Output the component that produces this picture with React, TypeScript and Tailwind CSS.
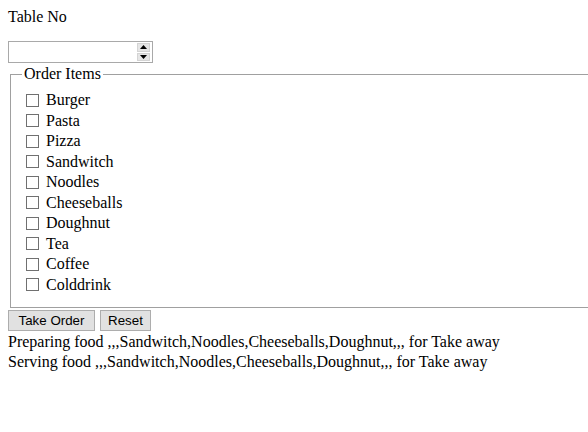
import React from "react";

const items = [
  "Burger",
  "Pasta",
  "Pizza",
  "Sandwitch",
  "Noodles",
  "Cheeseballs",
  "Doughnut",
  "Tea",
  "Coffee",
  "Colddrink",
];

const summary = ",,,Sandwitch,Noodles,Cheeseballs,Doughnut,,, for Take away";

function SpinBox() {
  return (
    <div className="mt-[15px] flex h-[22px] w-[145px] items-center justify-end border border-[#a9a9a9] bg-white pr-[2px]">
      {/* up / down arrows */}
      <div className="flex h-[18px] w-[13px] flex-col gap-px">
        <div className="flex flex-1 items-center justify-center border border-[#d4d4d4] bg-[#e6e6e6]">
          <svg width="7" height="4" viewBox="0 0 7 4">
            <path d="M3.5 0 L7 4 L0 4 Z" fill="#000" />
          </svg>
        </div>
        <div className="flex flex-1 items-center justify-center border border-[#d4d4d4] bg-[#e6e6e6]">
          <svg width="7" height="4" viewBox="0 0 7 4">
            <path d="M0 0 L7 0 L3.5 4 Z" fill="#000" />
          </svg>
        </div>
      </div>
    </div>
  );
}

function CheckRow({ label }: { label: string }) {
  return (
    <div className="flex h-[20.5px] items-center">
      <span className="h-[13px] w-[13px] shrink-0 border border-[#707070] bg-white" />
      <span className="ml-[7px] leading-[18px]">{label}</span>
    </div>
  );
}

export default function App() {
  return (
    <div className="min-h-screen w-full overflow-hidden bg-white px-2 pt-2 font-['Liberation_Serif',serif] text-[16px] text-black">
      <div className="leading-[18px]">Table No</div>

      <SpinBox />

      {/* ORDER ITEMS */}
      <fieldset className="mx-[2px] mt-[2px] w-[620px] border border-[#a0a0a0] pb-[12px] pl-[15px] pt-[7px]">
        <legend className="-ml-[4px] px-[2px] leading-[18px]">Order Items</legend>
        {items.map((item) => (
          <CheckRow key={item} label={item} />
        ))}
      </fieldset>

      <div className="mt-[2px] flex gap-[5px] font-['Liberation_Sans',Arial,sans-serif] text-[13.33px]">
        <button className="h-[21px] w-[87px] border border-[#adadad] bg-[#e1e1e1] leading-none">
          Take Order
        </button>
        <button className="h-[21px] w-[51px] border border-[#adadad] bg-[#e1e1e1] leading-none">
          Reset
        </button>
      </div>

      <div className="mt-px leading-[20px]">
        <div>Preparing food {summary}</div>
        <div>Serving food {summary}</div>
      </div>
    </div>
  );
}
